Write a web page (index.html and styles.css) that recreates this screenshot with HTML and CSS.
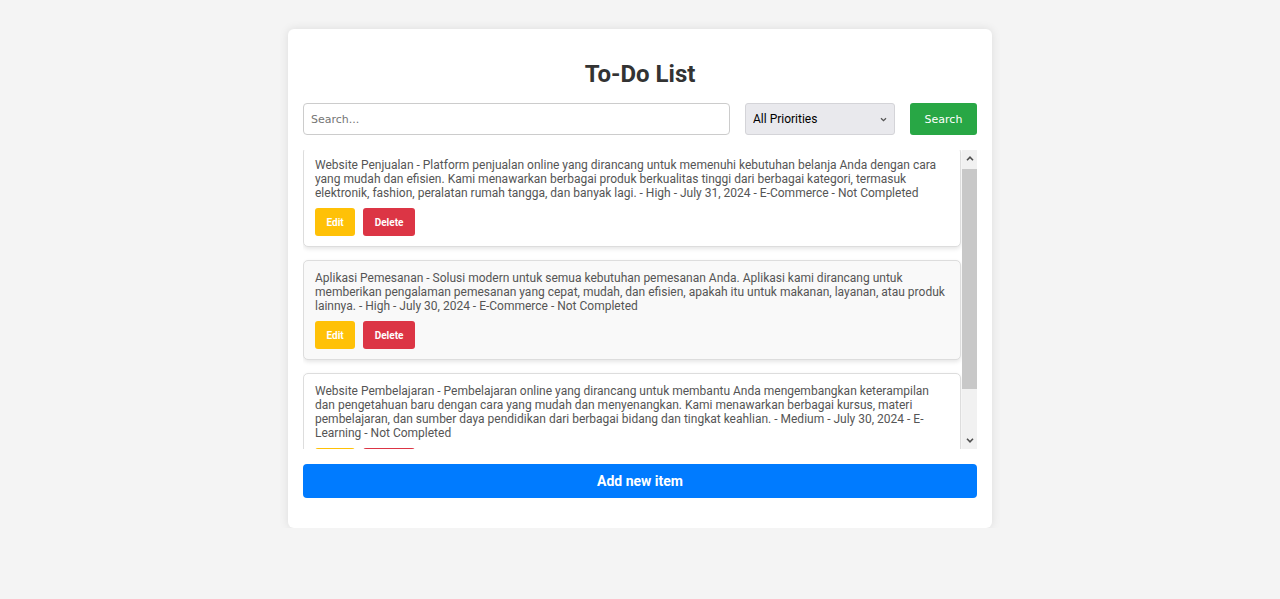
FILE: index.html
```html
<!DOCTYPE html>
<html lang="id">
<head>
<meta charset="utf-8">
<title>To-Do List</title>
<link rel="stylesheet" href="styles.css">
</head>
<body>
<div class="container">
  <h1 class="title">To-Do List</h1>
  <div class="toolbar">
    <input class="search-input" type="text" placeholder="Search...">
    <select class="priority-select">
      <option>All Priorities</option>
      <option>High</option>
      <option>Medium</option>
      <option>Low</option>
    </select>
    <button class="btn btn-search">Search</button>
  </div>
  <div class="list-wrap">
    <div class="list" id="todo-list">
      <div class="item">
        <p class="item-text">Website Penjualan - Platform penjualan online yang dirancang untuk memenuhi kebutuhan belanja Anda dengan cara yang mudah dan efisien. Kami menawarkan berbagai produk berkualitas tinggi dari berbagai kategori, termasuk elektronik, fashion, peralatan rumah tangga, dan banyak lagi. - High - July 31, 2024 - E-Commerce - Not Completed</p>
        <div class="actions">
          <button class="btn btn-edit">Edit</button>
          <button class="btn btn-delete">Delete</button>
        </div>
      </div>
      <div class="item item-alt">
        <p class="item-text">Aplikasi Pemesanan - Solusi modern untuk semua kebutuhan pemesanan Anda. Aplikasi kami dirancang untuk memberikan pengalaman pemesanan yang cepat, mudah, dan efisien, apakah itu untuk makanan, layanan, atau produk lainnya. - High - July 30, 2024 - E-Commerce - Not Completed</p>
        <div class="actions">
          <button class="btn btn-edit">Edit</button>
          <button class="btn btn-delete">Delete</button>
        </div>
      </div>
      <div class="item">
        <p class="item-text">Website Pembelajaran - Pembelajaran online yang dirancang untuk membantu Anda mengembangkan keterampilan dan pengetahuan baru dengan cara yang mudah dan menyenangkan. Kami menawarkan berbagai kursus, materi pembelajaran, dan sumber daya pendidikan dari berbagai bidang dan tingkat keahlian. - Medium - July 30, 2024 - E-Learning - Not Completed</p>
        <div class="actions">
          <button class="btn btn-edit">Edit</button>
          <button class="btn btn-delete">Delete</button>
        </div>
      </div>
    </div>
    <div class="scrollbar" aria-hidden="true">
      <div class="sb-btn">
        <svg width="8" height="5" viewBox="0 0 8 5"><path d="M1 4.2L4 1.2L7 4.2" fill="none" stroke="#505050" stroke-width="1.6"/></svg>
      </div>
      <div class="sb-track"><div class="sb-thumb"></div></div>
      <div class="sb-btn">
        <svg width="8" height="5" viewBox="0 0 8 5"><path d="M1 0.8L4 3.8L7 0.8" fill="none" stroke="#505050" stroke-width="1.6"/></svg>
      </div>
    </div>
  </div>
  <button class="btn btn-add">Add new item</button>
</div>
<script src="script.js"></script>
</body>
</html>
```

FILE: styles.css
```css
html, body {
  margin: 0;
  padding: 0;
}

body {
  background: #f4f4f4;
  font-family: Roboto, "Liberation Sans", Arial, sans-serif;
  color: #333;
}

.container {
  width: 674px;
  margin: 29px auto 0;
  padding: 31px 15px 30px;
  background: #fff;
  border-radius: 6px;
  box-shadow: 0 0 10px rgba(0, 0, 0, 0.1);
}

.title {
  margin: 0 0 15px;
  text-align: center;
  font-size: 24px;
  line-height: 28px;
  font-weight: 700;
  color: #333;
}

.toolbar {
  display: flex;
  gap: 15px;
  height: 32px;
}

.search-input {
  flex: 1;
  box-sizing: border-box;
  height: 32px;
  padding: 0 7px;
  border: 1px solid #ccc;
  border-radius: 4px;
  font-family: "DejaVu Sans", sans-serif;
  font-size: 11px;
  color: #333;
  outline: none;
}

.search-input::placeholder {
  color: #757575;
}

.priority-select {
  width: 150px;
  box-sizing: border-box;
  height: 32px;
  padding: 0 20px 0 7px;
  border: 1px solid #d4d4d8;
  border-radius: 3px;
  background-color: #e9e9ed;
  background-image: url("data:image/svg+xml,%3Csvg xmlns='http://www.w3.org/2000/svg' width='7' height='5'%3E%3Cpath d='M1 1.2L3.5 3.7L6 1.2' fill='none' stroke='%23555' stroke-width='1.3'/%3E%3C/svg%3E");
  background-repeat: no-repeat;
  background-position: right 7px center;
  -webkit-appearance: none;
  appearance: none;
  font-family: Roboto, Arial, sans-serif;
  font-size: 12px;
  color: #000;
  outline: none;
}

.btn {
  border: none;
  cursor: pointer;
  color: #fff;
}

.btn-search {
  width: 67px;
  height: 32px;
  padding: 0;
  border-radius: 3px;
  background: #28a745;
  font-family: "DejaVu Sans", sans-serif;
  font-size: 11px;
}

.list-wrap {
  display: flex;
  margin-top: 15px;
  height: 299px;
}

.list {
  flex: 1;
  min-width: 0;
  padding-right: 1px;
  overflow-y: auto;
  scrollbar-width: none;
}

.list::-webkit-scrollbar {
  display: none;
}

.scrollbar {
  width: 15px;
  display: flex;
  flex-direction: column;
  background: #f1f1f1;
}

.sb-btn {
  height: 17px;
  display: flex;
  align-items: center;
  justify-content: center;
  flex: none;
}

.sb-track {
  flex: 1;
  padding-top: 2px;
}

.sb-thumb {
  height: 220px;
  background: #c8c8c8;
}

.item {
  margin-bottom: 13px;
  padding: 10px 11px 10px 11px;
  background: #fff;
  border: 1px solid #ddd;
  border-radius: 5px;
  box-shadow: 0 2px 4px rgba(0, 0, 0, 0.1);
}

.item-alt {
  background: #f9f9f9;
}

.item-text {
  margin: 0 0 8px;
  font-size: 12px;
  line-height: 14px;
  color: #555;
}

.actions {
  display: flex;
  gap: 8px;
}

.btn-edit,
.btn-delete {
  height: 28px;
  padding: 0 11.5px;
  border-radius: 3px;
  font-family: Roboto, Arial, sans-serif;
  font-size: 10px;
  font-weight: 700;
}

.btn-edit {
  background: #ffc107;
}

.btn-delete {
  background: #dc3545;
}

.btn-add {
  display: block;
  width: 100%;
  height: 34px;
  margin-top: 15px;
  border-radius: 4px;
  background: #007bff;
  font-family: Roboto, Arial, sans-serif;
  font-size: 14px;
  font-weight: 700;
}
```

FILE: script.js
```js
document.getElementById('todo-list').scrollTop = 3;
```
